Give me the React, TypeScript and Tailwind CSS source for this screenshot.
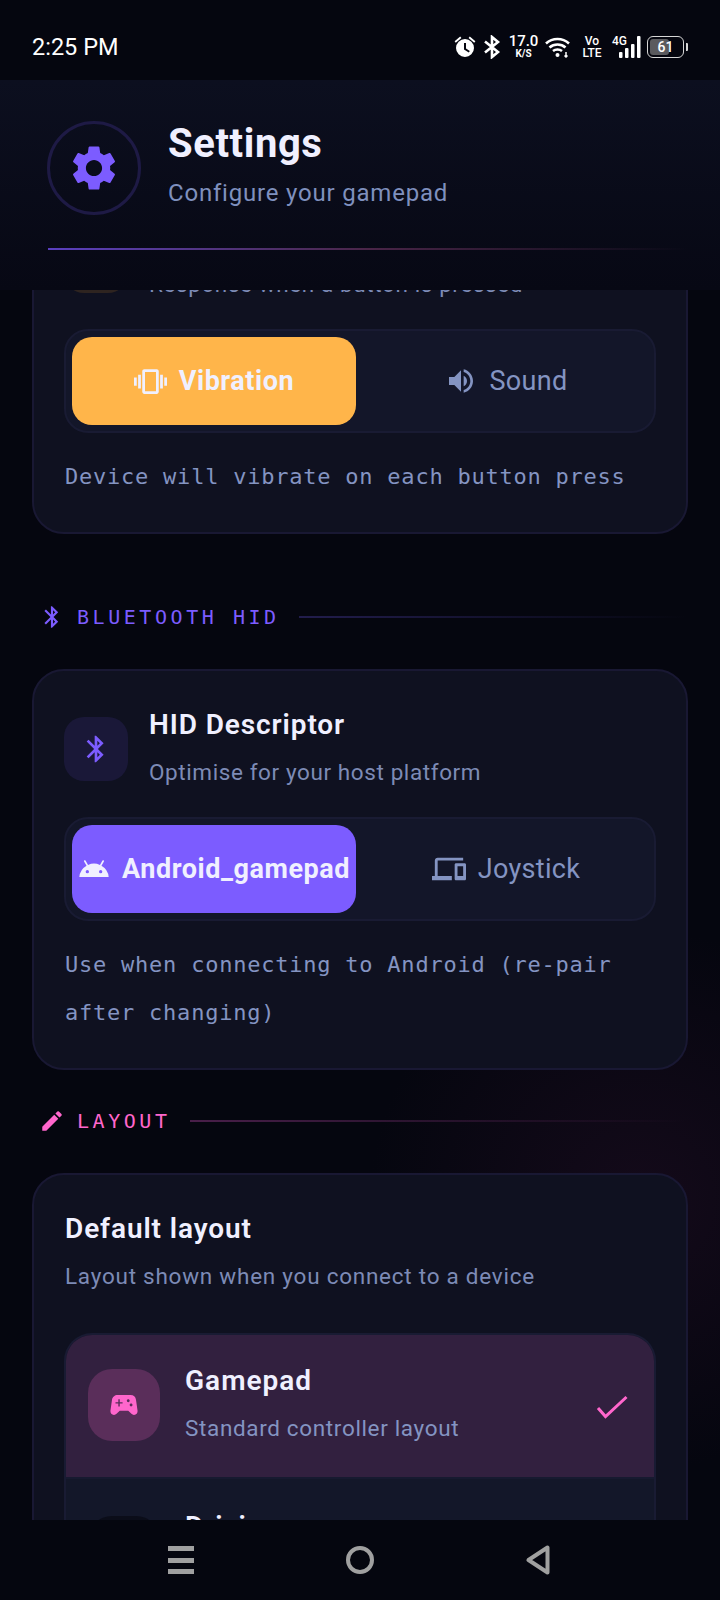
import { ReactNode } from "react";
import {
  MdSettings,
  MdVibration,
  MdVolumeUp,
  MdAndroid,
  MdDevices,
  MdBluetooth,
  MdEdit,
  MdSportsEsports,
  MdDirectionsCar,
} from "react-icons/md";

const sans = "font-['Roboto',sans-serif]";
const mono = "font-['DejaVu_Sans_Mono',monospace]";

function StatusBar() {
  return (
    <div className="h-[80px] shrink-0 bg-[#05060f] flex items-center justify-between pl-[32px] pr-[32px] pt-[14px] text-white">
      <span className="text-[23.500px] font-normal leading-none mt-[1px]">2:25 PM</span>
      <div className="flex items-center h-[24px]">
        <svg width="24" height="24" viewBox="0 0 24 24" fill="white">
          <path d="M12 4a9 9 0 1 0 0 18 9 9 0 0 0 0-18Zm1 9.600 3.800 2.300-1 1.500L11 14.400V8h2v5.600Z" />
          <path d="M7.200 1.600 1.600 6.200l1.200 1.500L8.400 3ZM16.800 1.600l5.600 4.600-1.200 1.500L15.600 3Z" />
        </svg>
        <svg className="ml-[6px]" width="18" height="24" viewBox="0 0 18 24" fill="none" stroke="white" strokeWidth="2.600">
          <path d="M2 6.500 15 17l-6 5V2l6 5L2 17.500" />
        </svg>
        <div className="ml-[8px] w-[29px] flex flex-col items-center text-center">
          <span className="text-[15px] leading-[12px] font-medium">17.0</span>
          <span className="text-[10px] leading-[10px] font-bold mt-[2px]">K/S</span>
        </div>
        <svg className="ml-[7px]" width="25" height="22" viewBox="0 0 25 22" fill="none" stroke="white" strokeWidth="2.600">
          <path d="M1 7.500c6.500-6 16.500-6 23 0M4.500 11.500c4.500-4 11.500-4 16 0M8 15c2.500-2 6.500-2 9 0" />
          <circle cx="12.500" cy="19" r="2" fill="white" stroke="none" />
          <path d="M21 16v5M19.500 19.500l1.500 1.500 1.500-1.500" strokeWidth="1.500" />
        </svg>
        <div className="ml-[13px] w-[18px] flex flex-col items-center">
          <span className="text-[12px] leading-[11px] font-medium">Vo</span>
          <span className="text-[12px] leading-[11px] font-medium mt-[1px]">LTE</span>
        </div>
        <div className="ml-[11px] relative w-[29px] h-[22px]">
          <span className="absolute left-0 top-0 text-[12px] leading-[11px] font-medium">4G</span>
          <svg className="absolute left-[7px] top-0" width="22" height="22" viewBox="0 0 22 22" fill="white">
            <rect x="0" y="16" width="3.500" height="6" rx="1" />
            <rect x="6" y="12" width="3.500" height="10" rx="1" />
            <rect x="12" y="8" width="3.500" height="14" rx="1" />
            <rect x="18" y="0" width="3.500" height="22" rx="1" />
          </svg>
        </div>
        <div className="ml-[6px] relative w-[37px] h-[22px] rounded-[6px] border-[1.5px] border-[#d6d6d6] p-[2px]">
          <div className="h-full w-[61%] rounded-[3px] bg-[#5a5a5e]" />
          <span className="absolute inset-0 flex items-center justify-center text-[14px] font-medium leading-none">61</span>
        </div>
        <div className="ml-[2px] w-[2px] h-[8px] rounded-r-[1px] bg-[#d6d6d6]" />
      </div>
    </div>
  );
}

function Header() {
  return (
    <div className="h-[210px] shrink-0 bg-gradient-to-b from-[#0c0f1f] to-[#070814] px-[47px] pt-[41px]">
      <div className="flex items-center">
        <div className="w-[94px] h-[94px] rounded-full border-[3px] border-[#1e1a45] flex items-center justify-center">
          <MdSettings className="text-[#7c5cff] -ml-[1px]" size={54} />
        </div>
        <div className="ml-[27px] -mt-[5px]">
          <h1 className="text-[40px] leading-[48px] font-bold text-[#f0f0ff] tracking-[0.6px]">Settings</h1>
          <p className="text-[24px] leading-[36px] mt-[7px] text-[#7f90be] tracking-[0.8px]">Configure your gamepad</p>
        </div>
      </div>
      <div className="mt-[33px] ml-[1px] h-[2px] w-[640px] bg-gradient-to-r from-[#5a3fc0] via-[#4a2548] to-transparent" />
    </div>
  );
}

function Segment({
  activeBg,
  leftGap,
  rightGap,
  left,
  right,
}: {
  activeBg: string;
  leftGap: string;
  rightGap: string;
  left: ReactNode;
  right: ReactNode;
}) {
  return (
    <div className="h-[104px] rounded-[24px] border-2 border-[#191b33] bg-[#131629] p-[6px] flex">
      <div className={`w-[284px] h-[88px] rounded-[20px] flex items-center justify-center text-[#f0f0ff] text-[27px] font-bold tracking-[0.55px] ${activeBg} ${leftGap}`}>
        {left}
      </div>
      <div className={`flex-1 h-[88px] pl-[8px] flex items-center justify-center text-[#8494c2] text-[27px] tracking-[0.3px] ${rightGap}`}>
        {right}
      </div>
    </div>
  );
}

function SectionLabel({
  icon,
  label,
  color,
  lineFrom,
}: {
  icon: ReactNode;
  label: string;
  color: string;
  lineFrom: string;
}) {
  return (
    <div className={`h-[30px] flex items-center ml-[41px] mr-[33px] ${color}`}>
      <div className="w-[36px] shrink-0">{icon}</div>
      <span className={`${mono} text-[20px] tracking-[3.550px] whitespace-nowrap`}>{label}</span>
      <div className={`ml-[19px] h-[2px] flex-1 bg-gradient-to-r to-transparent ${lineFrom}`} />
    </div>
  );
}

function Card({ className, children }: { className?: string; children: ReactNode }) {
  return (
    <div className={`mx-[32px] rounded-[32px] border-2 border-[#191833] bg-[#0f1120] px-[30px] ${className ?? ""}`}>
      {children}
    </div>
  );
}

function CardHead({
  iconBg,
  icon,
  title,
  sub,
}: {
  iconBg: string;
  icon: ReactNode;
  title: string;
  sub: string;
}) {
  return (
    <div className="flex h-[84px]">
      <div className={`mt-[16px] w-[64px] h-[64px] rounded-[20px] flex items-center justify-center ${iconBg}`}>{icon}</div>
      <div className="ml-[21px]">
        <div className="text-[28px] leading-[36px] mt-[6px] font-semibold text-[#f0f0ff] tracking-[0.9px]">{title}</div>
        <div className="text-[22.500px] leading-[32px] mt-[13px] text-[#7d8bb6] tracking-[0.6px]">{sub}</div>
      </div>
    </div>
  );
}

function Hint({ children }: { children: ReactNode }) {
  return (
    <p className={`${mono} text-[22px] leading-[48px] tracking-[0.77px] text-[#8494c2] mt-[20px] pl-[1px]`}>{children}</p>
  );
}

export default function App() {
  return (
    <div className={`${sans} w-[720px] h-[1600px] flex flex-col bg-[#05060f] overflow-hidden`}>
      <StatusBar />
      <Header />
      <main className="flex-1 min-h-0 overflow-hidden bg-[radial-gradient(circle_at_640px_910px,#140a1a_0%,#05060f_270px)] bg-no-repeat">
        <div className="-mt-[109px]">
          <Card className="pt-[30px] pb-[31px]">
            <CardHead
              iconBg="bg-[#2e2420]"
              icon={<MdVibration className="text-[#ffb54a]" size={32} />}
              title="Haptic feedback"
              sub="Response when a button is pressed"
            />
            <div className="mt-[32px]">
              <Segment
                activeBg="bg-[#ffb54a]"
                leftGap="gap-[12px]"
                rightGap="gap-[13px]"
                left={
                  <>
                    <MdVibration size={33} />
                    Vibration
                  </>
                }
                right={
                  <>
                    <MdVolumeUp size={32} />
                    Sound
                  </>
                }
              />
            </div>
            <Hint>Device will vibrate on each button press</Hint>
          </Card>
          <div className="mt-[68px]">
            <SectionLabel
              color="text-[#7c5cff]"
              lineFrom="from-[#221d4d]"
              icon={<MdBluetooth className="-ml-[2px]" size={26} />}
              label="BLUETOOTH HID"
            />
          </div>
          <Card className="mt-[37px] pt-[30px] pb-[31px]">
            <CardHead
              iconBg="bg-[#1a1838]"
              icon={<MdBluetooth className="text-[#7c5cff]" size={32} />}
              title="HID Descriptor"
              sub="Optimise for your host platform"
            />
            <div className="mt-[32px]">
              <Segment
                activeBg="bg-[#7c5cff]"
                leftGap="gap-[12px]"
                rightGap="gap-[12px]"
                left={
                  <>
                    <MdAndroid size={32} />
                    Android_gamepad
                  </>
                }
                right={
                  <>
                    <MdDevices size={34} />
                    Joystick
                  </>
                }
              />
            </div>
            <Hint>
              Use when connecting to Android (re-pair
              <br />
              after changing)
            </Hint>
          </Card>
          <div className="mt-[36px]">
            <SectionLabel
              color="text-[#ff66cc]"
              lineFrom="from-[#4a1f4a]"
              icon={<MdEdit className="-ml-[2px]" size={26} />}
              label="LAYOUT"
            />
          </div>
          <Card className="mt-[37px] pt-[36px] h-[420px]">
            <div className="pl-[1px] text-[28px] leading-[36px] font-semibold text-[#f0f0ff] tracking-[0.9px]">Default layout</div>
            <div className="pl-[1px] text-[22.500px] leading-[32px] mt-[13px] text-[#7d8bb6] tracking-[0.75px]">
              Layout shown when you connect to a device
            </div>
            <div className="mt-[41px] rounded-t-[28px] border-2 border-b-0 border-[#191b33] overflow-hidden">
              <div className="h-[142px] bg-[#32203f] flex items-start pl-[22px] pr-[26px] pt-[34px]">
                <div className="w-[72px] h-[72px] rounded-[24px] bg-[#5a2e5a] flex items-center justify-center">
                  <MdSportsEsports className="text-[#ff66cc]" size={34} />
                </div>
                <div className="ml-[25px] flex-1">
                  <div className="text-[28px] leading-[36px] -mt-[6px] font-semibold text-[#f0f0ff] tracking-[1px]">Gamepad</div>
                  <div className="text-[22.500px] leading-[32px] mt-[13px] text-[#8494c2] tracking-[0.65px]">Standard controller layout</div>
                </div>
                <svg className="mt-[26px]" width="32" height="24" viewBox="0 0 32 24" fill="none" stroke="#ff66cc" strokeWidth="3">
                  <path d="M2 13l7.500 8.500L30.500 2" />
                </svg>
              </div>
              <div className="h-[142px] bg-[#131729] border-t-2 border-[#171a30] flex items-start pl-[22px] pt-[37px]">
                <div className="w-[72px] h-[72px] rounded-[24px] bg-[#0b0d19] flex items-center justify-center">
                  <MdDirectionsCar className="text-[#8494c2]" size={34} />
                </div>
                <div className="ml-[25px] flex-1">
                  <div className="text-[28px] leading-[36px] -mt-[7px] font-semibold text-[#f0f0ff] tracking-[1px]">Driving</div>
                </div>
              </div>
            </div>
          </Card>
        </div>
      </main>
      <nav className="h-[80px] shrink-0 bg-[#05060f] flex items-center justify-center gap-[152px] pr-[2px]">
        <div className="w-[26px] h-[28px] flex flex-col justify-between">
          <div className="h-[5px] bg-[#a0a0a0]" />
          <div className="h-[5px] bg-[#a0a0a0]" />
          <div className="h-[5px] bg-[#a0a0a0]" />
        </div>
        <div className="w-[28px] h-[28px] rounded-full border-[4px] border-[#a0a0a0]" />
        <svg width="24" height="30" viewBox="0 0 24 30" fill="none" stroke="#a0a0a0" strokeWidth="4" strokeLinejoin="round">
          <path d="M21.500 2.500v25L2.500 15Z" />
        </svg>
      </nav>
    </div>
  );
}
